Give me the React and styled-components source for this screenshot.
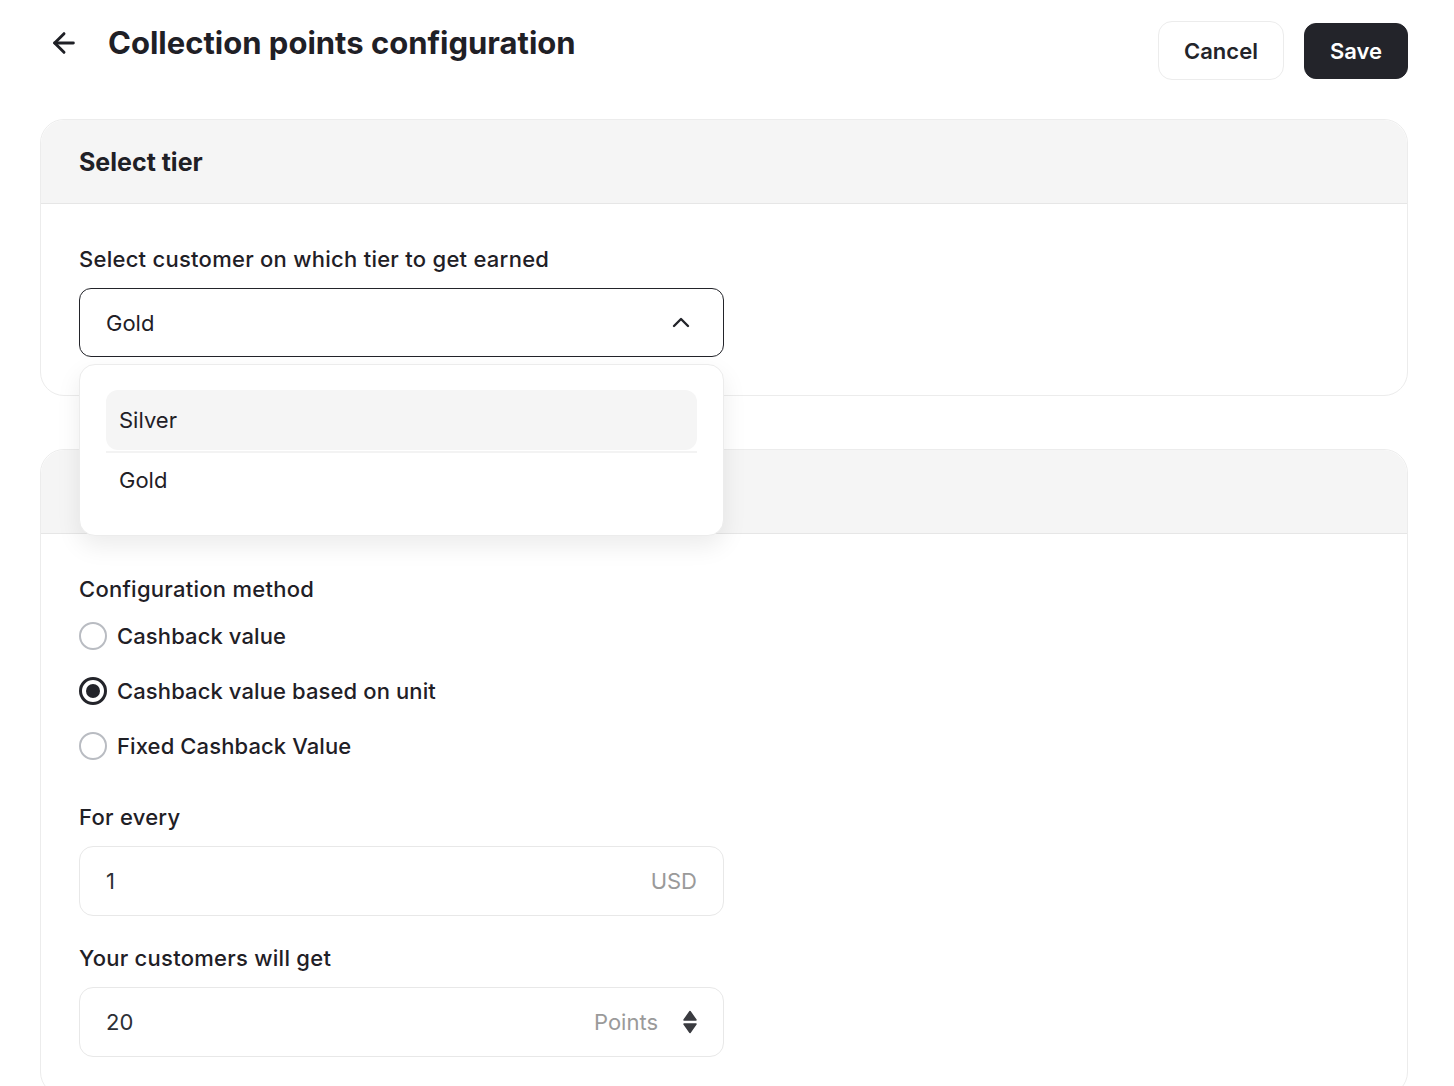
import React, { useState } from "react";
import styled, { createGlobalStyle } from "styled-components";

const GlobalStyle = createGlobalStyle`
  body {
    margin: 0;
    background: #fff;
    font-family: "Inter", "Liberation Sans", sans-serif;
    color: #1f2026;
  }
  * { box-sizing: border-box; }
`;

const Page = styled.div`
  padding: 20px 46px 0 40px;
  height: 1086px;
  overflow: hidden;
`;

const Header = styled.div`
  display: flex;
  align-items: flex-start;
  justify-content: space-between;
  margin-bottom: 39px;
`;

const TitleWrap = styled.div`
  display: flex;
  align-items: center;
  gap: 28px;
  padding-left: 8px;
  height: 45px;
`;

const BackButton = styled.button`
  border: none;
  background: none;
  padding: 0;
  display: flex;
  cursor: pointer;
  color: #1f2026;
`;

const Title = styled.h1`
  margin: 0;
  font-size: 31px;
  font-weight: 700;
  letter-spacing: 0;
`;

const Actions = styled.div`
  display: flex;
  align-items: center;
  gap: 20px;
  padding-top: 1px;
`;

const Button = styled.button`
  font-family: inherit;
  font-size: 22px;
  font-weight: 600;
  height: ${(p) => (p.$primary ? "56px" : "59px")};
  padding: 0 25px;
  border-radius: ${(p) => (p.$primary ? "12px" : "14px")};
  border: 1px solid ${(p) => (p.$primary ? "#23242a" : "#ececec")};
  background: ${(p) => (p.$primary ? "#23242a" : "#fff")};
  color: ${(p) => (p.$primary ? "#fff" : "#23242a")};
  cursor: pointer;
`;

const Stack = styled.div`
  display: flex;
  flex-direction: column;
  gap: 53px;
`;

const Card = styled.section`
  border: 1px solid #ececec;
  border-radius: 24px;
  background: #fff;
  position: relative;
  z-index: ${(p) => p.$z || 1};
`;

const CardHeader = styled.div`
  height: 84px;
  background: #f5f5f5;
  border-bottom: 1px solid #e6e6e6;
  border-radius: 24px 24px 0 0;
  display: flex;
  align-items: center;
  padding: 0 38px;
`;

const CardTitle = styled.h2`
  margin: 0;
  font-size: 25px;
  font-weight: 700;
`;

const CardBody = styled.div`
  padding: 42px 38px 38px;
  display: flex;
  flex-direction: column;
`;

const Label = styled.div`
  font-size: 22px;
  font-weight: 500;
  letter-spacing: 0.012em;
  margin-bottom: ${(p) => p.$mb || "16px"};
`;

const Field = styled.div`
  position: relative;
  width: 645px;
`;

const SelectBox = styled.div`
  height: 69px;
  border: 1px solid #23242a;
  border-radius: 12px;
  display: flex;
  align-items: center;
  justify-content: space-between;
  padding: 0 30px 0 26px;
  font-size: 22px;
  cursor: pointer;
`;

const Menu = styled.div`
  position: absolute;
  top: 76px;
  left: 0;
  right: 0;
  background: #fff;
  border: 1px solid #ececec;
  border-radius: 16px;
  box-shadow: 0 10px 24px rgba(0, 0, 0, 0.08);
  padding: 25px 26px 28px;
  z-index: 5;
`;

const MenuItem = styled.div`
  height: ${(p) => (p.$active ? "60px" : "54px")};
  display: flex;
  align-items: center;
  padding: 0 13px;
  font-size: 22px;
  border-radius: 12px;
  background: ${(p) => (p.$active ? "#f5f5f5" : "transparent")};
  cursor: pointer;
`;

const MenuDivider = styled.div`
  height: 2px;
  background: #f3f3f3;
  margin-top: 1px;
`;

const RadioGroup = styled.div`
  display: flex;
  flex-direction: column;
  gap: 27px;
  margin-bottom: 44px;
`;

const RadioRow = styled.label`
  display: flex;
  align-items: center;
  gap: 10px;
  font-size: 22px;
  font-weight: 500;
  letter-spacing: 0.005em;
  cursor: pointer;
`;

const RadioDot = styled.span`
  width: 28px;
  height: 28px;
  border-radius: 50%;
  border: ${(p) => (p.$checked ? "3px solid #23242a" : "2px solid #b9bcc2")};
  display: flex;
  align-items: center;
  justify-content: center;
  &::after {
    content: "";
    width: 14px;
    height: 14px;
    border-radius: 50%;
    background: #23242a;
    display: ${(p) => (p.$checked ? "block" : "none")};
  }
`;

const InputBox = styled.div`
  width: 645px;
  height: 70px;
  border: 1px solid #e8e8e8;
  border-radius: 14px;
  display: flex;
  align-items: center;
  padding: 0 26px;
  font-size: 22px;
  margin-bottom: ${(p) => p.$mb || "0"};
`;

const Value = styled.span`
  flex: 1;
  color: #2c2f36;
`;

const Unit = styled.span`
  color: #9a9a9a;
`;

const Spinner = styled.span`
  display: flex;
  margin-left: 24px;
  margin-right: -1px;
`;

const ArrowLeft = () => (
  <svg width="32" height="32" viewBox="0 0 24 24" fill="none" stroke="currentColor" strokeWidth="2.2" strokeLinecap="round" strokeLinejoin="round">
    <path d="M19 12H5" />
    <path d="M12 19l-7-7 7-7" />
  </svg>
);

const ChevronUp = () => (
  <svg width="24" height="24" viewBox="0 0 24 24" fill="none" stroke="#23242a" strokeWidth="2.4" strokeLinecap="round" strokeLinejoin="round">
    <path d="M5 15l7-7 7 7" />
  </svg>
);

const UpDown = () => (
  <svg width="16" height="26" viewBox="0 0 16 26" fill="#3a3b40" stroke="#3a3b40" strokeWidth="1.5" strokeLinejoin="round">
    <path d="M8 2.5L14 11H2z" />
    <path d="M8 23.5L2 15h12z" />
  </svg>
);

const options = ["Cashback value", "Cashback value based on unit", "Fixed Cashback Value"];

export default function App() {
  const [method, setMethod] = useState(1);
  const [tier, setTier] = useState("Gold");
  return (
    <Page>
      <GlobalStyle />
      <Header>
        <TitleWrap>
          <BackButton aria-label="Back">
            <ArrowLeft />
          </BackButton>
          <Title>Collection points configuration</Title>
        </TitleWrap>
        <Actions>
          <Button>Cancel</Button>
          <Button $primary>Save</Button>
        </Actions>
      </Header>
      <Stack>
        <Card $z={2}>
          <CardHeader>
            <CardTitle>Select tier</CardTitle>
          </CardHeader>
          <CardBody>
            <Label>Select customer on which tier to get earned</Label>
            <Field>
              <SelectBox>
                <span>{tier}</span>
                <ChevronUp />
              </SelectBox>
              <Menu>
                <MenuItem $active onClick={() => setTier("Silver")}>Silver</MenuItem>
                <MenuDivider />
                <MenuItem onClick={() => setTier("Gold")}>Gold</MenuItem>
              </Menu>
            </Field>
          </CardBody>
        </Card>
        <Card>
          <CardHeader />
          <CardBody>
            <Label $mb="20px">Configuration method</Label>
            <RadioGroup>
              {options.map((o, i) => (
                <RadioRow key={o} onClick={() => setMethod(i)}>
                  <RadioDot $checked={method === i} />
                  {o}
                </RadioRow>
              ))}
            </RadioGroup>
            <Label>For every</Label>
            <InputBox $mb="29px">
              <Value>1</Value>
              <Unit>USD</Unit>
            </InputBox>
            <Label>Your customers will get</Label>
            <InputBox>
              <Value>20</Value>
              <Unit>Points</Unit>
              <Spinner>
                <UpDown />
              </Spinner>
            </InputBox>
          </CardBody>
        </Card>
      </Stack>
    </Page>
  );
}
